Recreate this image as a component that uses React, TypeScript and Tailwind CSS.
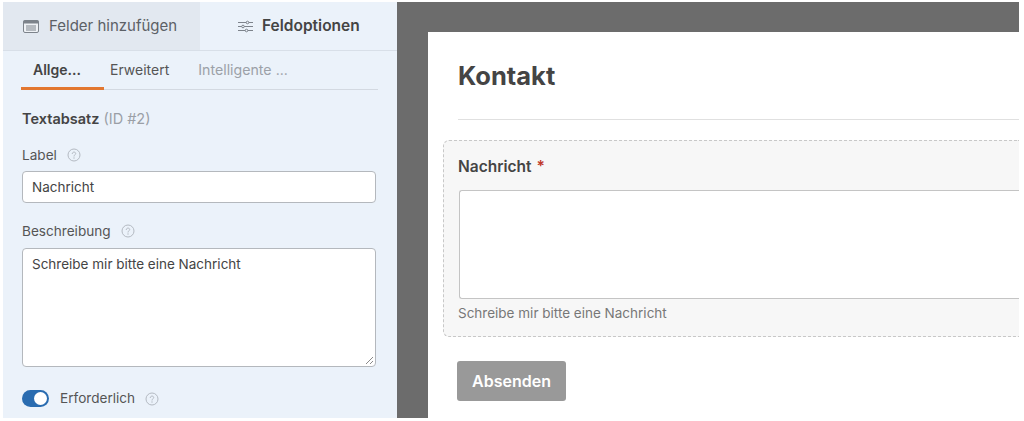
import React from "react";

function Help({ className = "" }: { className?: string }) {
  return (
    <svg width="14" height="14" viewBox="0 0 14 14" fill="none" className={className}>
      <circle cx="7" cy="7" r="6" stroke="#b4bac2" strokeWidth="1" />
      <path d="M5.3 5.6C5.4 4.6 6.1 4.1 7 4.1c1 0 1.7.6 1.7 1.4 0 .7-.4 1-.9 1.4-.5.3-.8.6-.8 1.2" stroke="#b4bac2" strokeWidth="1" strokeLinecap="round" />
      <circle cx="7" cy="10" r=".7" fill="#b4bac2" />
    </svg>
  );
}

export default function App() {
  return (
    <div className="w-[1024px] h-[421px] overflow-hidden bg-white pt-[2px] pb-[3px] pl-[3px] pr-[5px] flex font-['Inter','Liberation_Sans',sans-serif] text-[#444]">
      <div className="w-[394px] shrink-0 bg-[#ebf2fa] flex flex-col">
        <div className="h-[49px] flex border-b border-[#d8dfe8] shrink-0">
          <div className="w-[197px] bg-[#e2e8f0] flex items-center pl-[20px] gap-[10px] text-[#5c6066] text-[15px]">
            <svg width="16" height="13" viewBox="0 0 16 13" fill="none">
              <rect x=".5" y=".5" width="15" height="12" rx="1.5" fill="#eef1f5" stroke="#7d838b" />
              <rect x=".5" y=".5" width="15" height="3" fill="#7d838b" />
              <path d="M3 6h10M3 8h10M3 10h10" stroke="#7d838b" />
            </svg>
            <span>Felder hinzufügen</span>
          </div>
          <div className="flex-1 flex items-center pl-[38px] gap-[9px] text-[15.500px] font-semibold text-[#444]">
            <svg width="15" height="13" viewBox="0 0 15 13" fill="none" stroke="#7d838b">
              <path d="M0 2.5h15M0 6.500h15M0 10.500h15" />
              <circle cx="9.500" cy="2.500" r="1.300" fill="#ebf2fa" />
              <circle cx="5" cy="6.500" r="1.300" fill="#ebf2fa" />
              <circle cx="8.500" cy="10.500" r="1.300" fill="#ebf2fa" />
            </svg>
            <span>Feldoptionen</span>
          </div>
        </div>

        <div className="ml-[18px] mr-[19px] h-[39px] flex border-b border-[#d3d9e1] text-[14px] relative">
          <div className="w-[83px] h-[39px] pt-[8px] pl-[12px] font-semibold text-[#444] border-b-[3px] border-[#e27730]">Allge...</div>
          <div className="pt-[8px] ml-[6px] text-[#555]">Erweitert</div>
          <div className="pt-[8px] ml-[29px] text-[#9ca1a8] text-[14.200px]">Intelligente ...</div>
        </div>

        <div className="ml-[19px] mr-[21px] flex flex-col">
          <div className="mt-[19px] h-[20px] leading-[20px] text-[14.500px]">
            <span className="font-semibold">Textabsatz</span> <span className="text-[#9a9fa6]">(ID #2)</span>
          </div>

          <div className="mt-[16px] h-[20px] flex items-center gap-[10px] text-[13.600px] text-[#555]">
            <span>Label</span>
            <Help />
          </div>
          <div className="mt-[6px] h-[32px] bg-white border border-[#b4b8bd] rounded-[4px] pl-[9px] flex items-center text-[13.500px] text-[#444]">Nachricht</div>

          <div className="mt-[18px] h-[20px] flex items-center gap-[10px] text-[13.600px] text-[#555]">
            <span>Beschreibung</span>
            <Help />
          </div>
          <div className="mt-[7px] h-[119px] bg-white border border-[#b4b8bd] rounded-[4px] pl-[9px] pt-[5px] text-[13.500px] text-[#444] relative">
            Schreibe mir bitte eine Nachricht
            <svg width="9" height="9" viewBox="0 0 9 9" className="absolute right-[1px] bottom-[1px]" stroke="#8a8a8a" fill="none">
              <path d="M1 8L8 1M5 8L8 5" />
            </svg>
          </div>

          <div className="mt-[23px] h-[17px] flex items-center text-[13.600px] text-[#555]">
            <div className="w-[27px] h-[17px] rounded-full bg-[#2a6cb0] relative shrink-0">
              <div className="absolute right-[2px] top-[2px] w-[13px] h-[13px] bg-white rounded-full" />
            </div>
            <span className="ml-[11px]">Erforderlich</span>
            <Help className="ml-[10px]" />
          </div>
        </div>
      </div>

      <div className="flex-1 bg-[#6c6c6c] pl-[31px] pt-[30px] flex min-w-0">
        <div className="flex-1 bg-white flex flex-col min-w-0 relative">
          <div className="ml-[30px] h-[88px] border-b border-[#e0e0e0] pt-[26px] text-[25.500px] leading-[36px] font-bold text-[#444] shrink-0">Kontakt</div>
          <div className="ml-[15px] mt-[20px] h-[197px] bg-[#f7f7f7] border border-dashed border-r-0 border-[#c8c8c8] rounded-l-[6px] pl-[14px] flex flex-col shrink-0">
            <div className="mt-[16px] h-[20px] leading-[20px] text-[15.500px] font-semibold text-[#444]">
              Nachricht <span className="text-[#c0392b] ml-[1px]">*</span>
            </div>
            <div className="mt-[13px] h-[109px] ml-[1px] bg-white border border-[#c4c4c4] border-r-0 rounded-l-[3px] shrink-0" />
            <div className="mt-[5px] h-[18px] leading-[18px] text-[13.500px] text-[#777]">Schreibe mir bitte eine Nachricht</div>
          </div>
          <div className="ml-[29px] mt-[24px] w-[109px] h-[40px] bg-[#999] rounded-[3px] flex items-center justify-center text-white text-[16px] font-semibold">Absenden</div>
        </div>
      </div>
    </div>
  );
}
